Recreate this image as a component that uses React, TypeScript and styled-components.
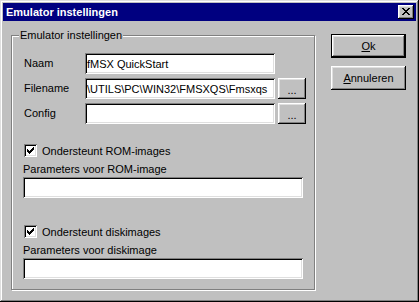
import React from 'react';
import styled, { createGlobalStyle } from 'styled-components';

const GlobalStyle = createGlobalStyle`
  html, body {
    margin: 0;
    padding: 0;
    background: #c0c0c0;
  }
  body {
    font-family: "Liberation Sans", Arial, sans-serif;
    font-size: 11px;
  }
`;

const Window = styled.div`
  width: 419px;
  height: 302px;
  box-sizing: border-box;
  padding: 3px;
  background: #c0c0c0;
  box-shadow: inset -1px -1px #000, inset 1px 1px #dfdfdf, inset -2px -2px #808080, inset 2px 2px #fff;
  display: flex;
  flex-direction: column;
`;

const TitleBar = styled.div`
  height: 18px;
  background: #000080;
  display: flex;
  align-items: center;
  justify-content: space-between;
  padding: 0 2px 0 3px;
`;

const Title = styled.span`
  color: #fff;
  font-weight: bold;
  font-size: 11px;
  line-height: 13px;
`;

const RaisedBox = styled.button`
  margin: 0;
  padding: 0;
  border: none;
  background: #c0c0c0;
  box-shadow: inset -1px -1px #000, inset 1px 1px #fff, inset -2px -2px #808080, inset 2px 2px #dfdfdf;
  font-family: inherit;
  font-size: 11px;
  color: #000;
  display: flex;
  align-items: center;
  justify-content: center;
`;

const CloseButton = styled(RaisedBox)`
  width: 16px;
  height: 14px;
  padding-bottom: 1px;
`;

const Body = styled.div`
  display: flex;
  align-items: flex-start;
`;

const GroupBox = styled.div`
  position: relative;
  margin: 14px 0 0 8px;
  width: 304px;
  height: 255px;
  box-sizing: border-box;
  border: 1px solid #808080;
  box-shadow: 1px 1px 0 #fff, inset 1px 1px 0 #fff;
  padding: 17px 11px 0 11px;
`;

const Legend = styled.span`
  position: absolute;
  top: -7px;
  left: 7px;
  padding: 0 1px;
  background: #c0c0c0;
  line-height: 13px;
`;

const FieldGrid = styled.div`
  display: grid;
  grid-template-columns: 59px 190px 28px;
  grid-auto-rows: 21px;
  column-gap: 3px;
  row-gap: 4px;
  align-items: center;
`;

const Label = styled.span`
  grid-column: 1;
  line-height: 13px;
  padding-left: 1px;
`;

const Field = styled.input`
  height: 21px;
  box-sizing: border-box;
  border: none;
  outline: none;
  margin: 0;
  padding: 0 1px 0 2px;
  background: #fff;
  box-shadow: inset 1px 1px #808080, inset -1px -1px #fff, inset 2px 2px #000, inset -2px -2px #dfdfdf;
  font-family: inherit;
  font-size: 11px;
  color: #000;
  width: 100%;
`;

const BrowseButton = styled(RaisedBox)`
  height: 21px;
  width: 28px;
  padding-top: 2px;
`;

const CheckRow = styled.label<{ $top: number }>`
  display: flex;
  align-items: center;
  gap: 5px;
  margin-top: ${p => p.$top}px;
  height: 13px;
  padding-left: 1px;
`;

const CheckBox = styled.span`
  width: 13px;
  height: 13px;
  box-sizing: border-box;
  background: #fff;
  box-shadow: inset 1px 1px #808080, inset -1px -1px #fff, inset 2px 2px #000, inset -2px -2px #dfdfdf;
  display: flex;
  align-items: center;
  justify-content: center;
`;

const ParamLabel = styled.div`
  margin-top: 6px;
  line-height: 13px;
  height: 13px;
`;

const ParamField = styled(Field)`
  margin-top: 1px;
  display: block;
`;

const ButtonColumn = styled.div`
  display: flex;
  flex-direction: column;
  gap: 8px;
  margin: 13px 0 0 16px;
`;

const DialogButton = styled(RaisedBox)<{ $default?: boolean }>`
  width: 75px;
  height: 24px;
  box-shadow: ${p =>
    p.$default
      ? 'inset 0 0 0 1px #000, inset -2px -2px #000, inset 2px 2px #fff, inset -3px -3px #808080, inset 3px 3px #dfdfdf'
      : 'inset -1px -1px #000, inset 1px 1px #fff, inset -2px -2px #808080, inset 2px 2px #dfdfdf'};
`;

const Mnemonic = styled.span`
  text-decoration: underline;
`;

const CheckMark = () => (
  <svg width="7" height="7" viewBox="0 0 7 7" shapeRendering="crispEdges">
    <path
      fill="#000"
      d="M6 0h1v1h-1zM5 1h2v1h-2zM0 2h1v1h-1zM4 2h3v1h-3zM0 3h2v1h-2zM3 3h3v1h-3zM0 4h5v1h-5zM1 5h3v1h-3zM2 6h1v1h-1z"
    />
  </svg>
);

const CloseGlyph = () => (
  <svg width="8" height="7" viewBox="0 0 8 7" shapeRendering="crispEdges">
    <path
      fill="#000"
      d="M0 0h2v1h-2zM6 0h2v1h-2zM1 1h2v1h-2zM5 1h2v1h-2zM2 2h4v1h-4zM3 3h2v1h-2zM2 4h4v1h-4zM1 5h2v1h-2zM5 5h2v1h-2zM0 6h2v1h-2zM6 6h2v1h-2z"
    />
  </svg>
);

const App: React.FC = () => {
  return (
    <>
      <GlobalStyle />
      <Window>
        <TitleBar>
          <Title>Emulator instellingen</Title>
          <CloseButton>
            <CloseGlyph />
          </CloseButton>
        </TitleBar>
        <Body>
          <GroupBox>
            <Legend>Emulator instellingen</Legend>
            <FieldGrid>
              <Label>Naam</Label>
              <Field defaultValue="fMSX QuickStart" />
              <Label>Filename</Label>
              <Field defaultValue="\UTILS\PC\WIN32\FMSXQS\Fmsxqs" />
              <BrowseButton>...</BrowseButton>
              <Label>Config</Label>
              <Field defaultValue="" />
              <BrowseButton>...</BrowseButton>
            </FieldGrid>
            <CheckRow $top={20}>
              <CheckBox>
                <CheckMark />
              </CheckBox>
              Ondersteunt ROM-images
            </CheckRow>
            <ParamLabel>Parameters voor ROM-image</ParamLabel>
            <ParamField defaultValue="" />
            <CheckRow $top={27}>
              <CheckBox>
                <CheckMark />
              </CheckBox>
              Ondersteunt diskimages
            </CheckRow>
            <ParamLabel>Parameters voor diskimage</ParamLabel>
            <ParamField defaultValue="" />
          </GroupBox>
          <ButtonColumn>
            <DialogButton $default>
              <Mnemonic>O</Mnemonic>k
            </DialogButton>
            <DialogButton>
              <Mnemonic>A</Mnemonic>nnuleren
            </DialogButton>
          </ButtonColumn>
        </Body>
      </Window>
    </>
  );
};

export default App;
